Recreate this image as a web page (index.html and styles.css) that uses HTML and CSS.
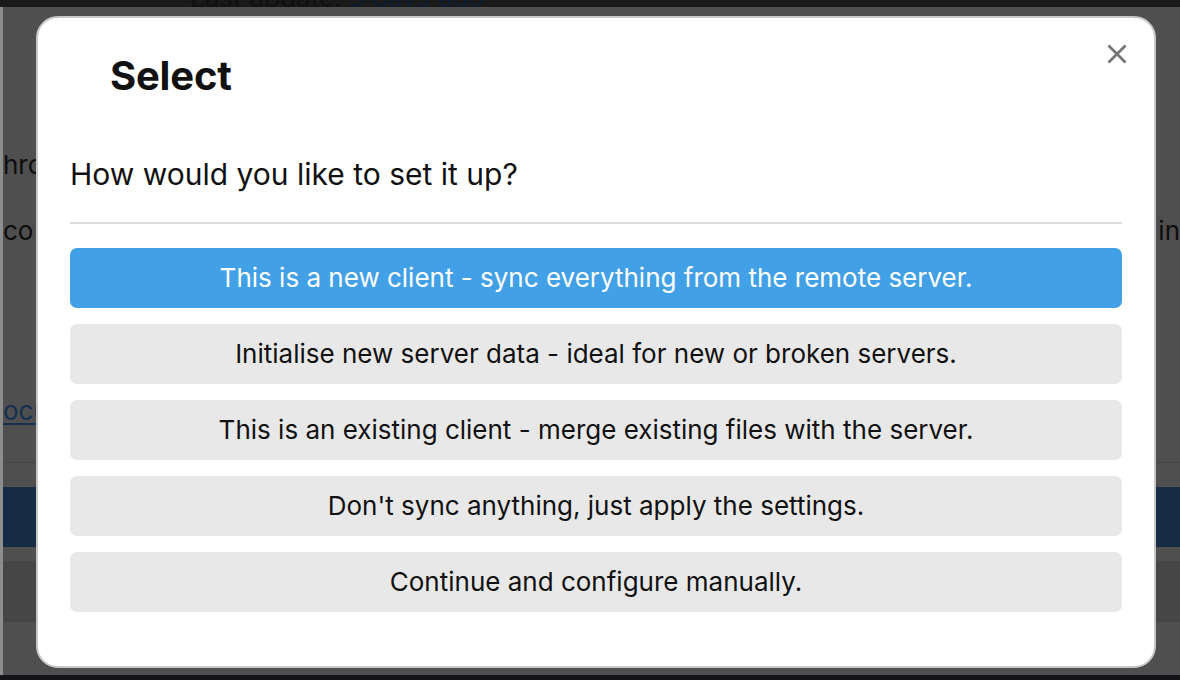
FILE: index.html
```html
<!DOCTYPE html>
<html lang="en">
<head>
<meta charset="utf-8">
<title>Select</title>
<link rel="stylesheet" href="styles.css">
</head>
<body>
<div class="page">
  <div class="topbar">
    <div class="topbar-text">Last update: <span class="dim-link">3 days ago</span></div>
  </div>
  <div class="main">
    <div class="bg-row bg-row-1">
      <p class="bg-line bg-left">hro</p>
    </div>
    <div class="bg-row bg-row-2">
      <p class="bg-line bg-left">co</p>
      <p class="bg-line">in</p>
    </div>
    <div class="bg-row bg-row-3">
      <p class="bg-line bg-left bg-link">ocu</p>
    </div>
    <div class="bg-rule"></div>
    <div class="bg-bar"></div>
    <div class="bg-band"></div>
  </div>
  <div class="bottombar"></div>

  <div class="modal" role="dialog" aria-labelledby="modal-title">
    <button class="close" aria-label="Close">
      <svg width="22" height="22" viewBox="0 0 22 22"><path d="M2.5 2.5 L19.5 19.5 M19.5 2.5 L2.5 19.5" stroke="#767676" stroke-width="2.8" fill="none"/></svg>
    </button>
    <h1 class="title" id="modal-title">Select</h1>
    <p class="question">How would you like to set it up?</p>
    <hr class="divider">
    <div class="options">
      <button class="option primary">This is a new client - sync everything from the remote server.</button>
      <button class="option">Initialise new server data - ideal for new or broken servers.</button>
      <button class="option">This is an existing client - merge existing files with the server.</button>
      <button class="option">Don't sync anything, just apply the settings.</button>
      <button class="option">Continue and configure manually.</button>
    </div>
  </div>
</div>
</body>
</html>
```

FILE: styles.css
```css
html, body {
  margin: 0;
  padding: 0;
}
body {
  width: 1180px;
  height: 680px;
  overflow: hidden;
  background: #4e4e4e;
  font-family: Inter, "Noto Sans", sans-serif;
}
.page {
  position: relative;
  width: 1180px;
  height: 680px;
  display: grid;
  grid-template-rows: 7px 1fr 5px;
}
.topbar {
  background: #191919;
  overflow: hidden;
  padding-left: 190px;
}
.topbar-text {
  margin-top: -16px;
  font-size: 26px;
  line-height: 28px;
  color: #101010;
  white-space: nowrap;
}
.dim-link {
  color: #0c1b2e;
}
.main {
  border-left: 3px solid #8d8d8d;
  background: #4f4f4f;
  display: flex;
  flex-direction: column;
  overflow: hidden;
}
.bg-row {
  display: flex;
  justify-content: space-between;
}
.bg-row-1 {
  margin-top: 143px;
}
.bg-row-2 {
  margin-top: 36px;
}
.bg-row-3 {
  margin-top: 150px;
}
.bg-line {
  margin: 0;
  font-size: 26px;
  line-height: 30px;
  color: #0d0d0d;
  white-space: nowrap;
}
.bg-left {
  width: 34px;
  overflow: hidden;
}
.bg-link {
  color: #15304e;
  text-decoration: underline;
  text-underline-offset: 3px;
}
.bg-rule {
  margin-top: 36px;
  height: 1px;
  background: #454545;
}
.bg-bar {
  margin-top: 24px;
  height: 60px;
  background: #162c45;
}
.bg-band {
  margin-top: 14px;
  height: 61px;
  background: #464646;
}
.bottombar {
  background: #121418;
}

.modal {
  position: absolute;
  left: 36px;
  top: 16px;
  width: 1120px;
  height: 652px;
  box-sizing: border-box;
  background: #fff;
  border: 2px solid #c8c8c8;
  border-radius: 22px;
  padding: 34px 32px 0 32px;
  display: flex;
  flex-direction: column;
}
.close {
  position: absolute;
  top: 25px;
  right: 26px;
  width: 22px;
  height: 22px;
  padding: 0;
  border: 0;
  background: none;
  display: flex;
}
.title {
  margin: 0 0 0 40px;
  font-size: 40px;
  line-height: 48px;
  font-weight: 700;
  color: #111;
  letter-spacing: -0.2px;
}
.question {
  margin: 57px 0 0 0;
  font-size: 30px;
  line-height: 34px;
  color: #111;
}
.divider {
  margin: 31px 0 0 0;
  border: 0;
  height: 2px;
  background: #dcdcdc;
}
.options {
  margin-top: 24px;
  display: flex;
  flex-direction: column;
  gap: 16px;
}
.option {
  height: 60px;
  border: 0;
  border-radius: 7px;
  background: #e8e8e8;
  color: #111;
  font-family: Inter, "Noto Sans", sans-serif;
  font-size: 26px;
  padding: 0 16px 2px;
  text-align: center;
}
.option.primary {
  background: #42a0e6;
  color: #fff;
}
```
